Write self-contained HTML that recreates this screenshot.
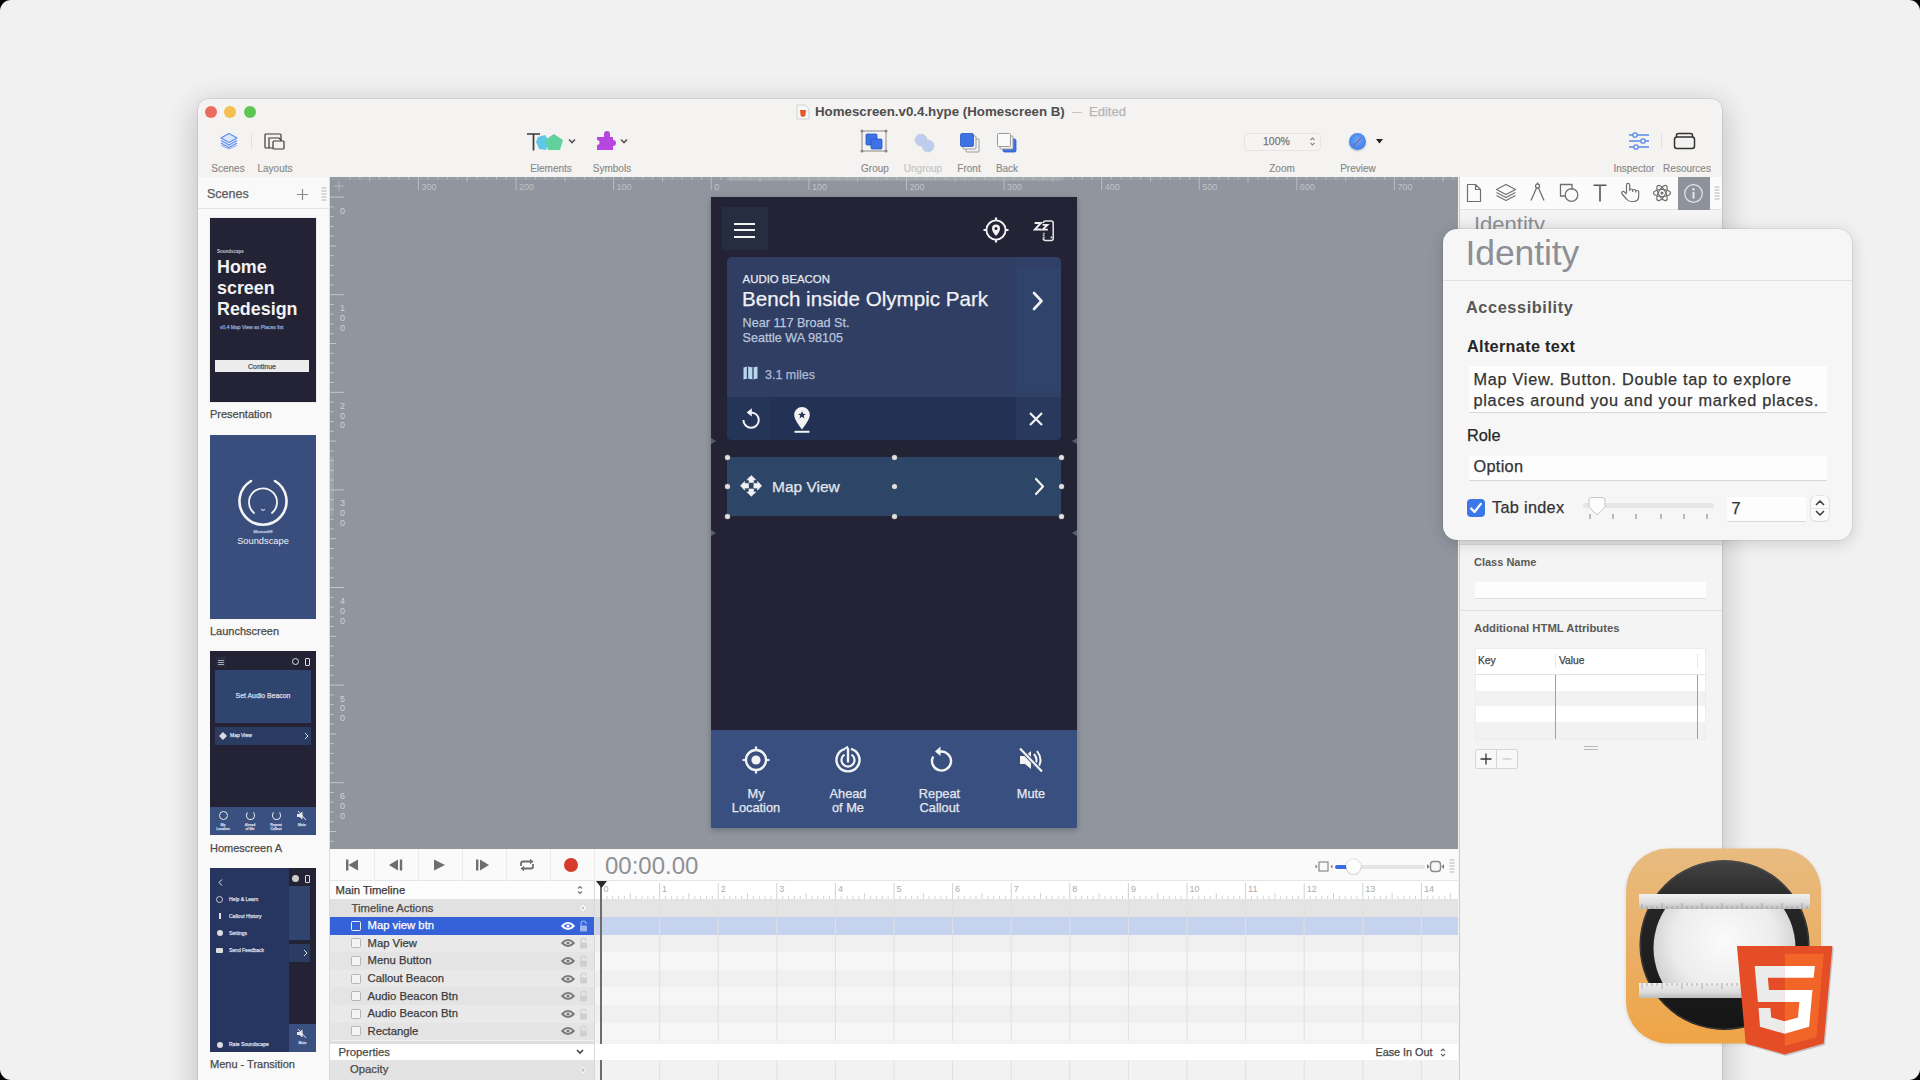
<!DOCTYPE html>
<html><head><meta charset="utf-8">
<style>
*{box-sizing:border-box;margin:0;padding:0}
html,body{width:1920px;height:1080px;overflow:hidden;background:#000}
body{font-family:"Liberation Sans",sans-serif;position:relative}
.a{position:absolute}
#scr{position:absolute;left:0;top:0;width:1920px;height:1080px;background:#f1f1f1;border-radius:11px;overflow:hidden}
#win{position:absolute;left:198px;top:99px;width:1524px;height:1000px;background:#f4f3f1;border-radius:10px 10px 0 0;box-shadow:0 0 0 .5px rgba(0,0,0,.14),0 8px 30px 3px rgba(0,0,0,.2)}
.tl{position:absolute;width:12px;height:12px;border-radius:50%}
.lbl{position:absolute;font-size:10px;color:#8a8a8a;margin-top:1px;text-align:center;white-space:nowrap}
.t{position:absolute;white-space:nowrap;line-height:1;-webkit-text-stroke:.25px currentColor}
.lbl{-webkit-text-stroke:.15px currentColor}
.t[style*="font-weight:bold"]{-webkit-text-stroke:0}
</style></head><body>
<div id="scr">
<div id="win"></div>

<!-- ===== TOOLBAR ===== -->
<div class="tl" style="left:205px;top:106px;background:#ec6a5e"></div>
<div class="tl" style="left:224px;top:106px;background:#f4bf4f"></div>
<div class="tl" style="left:244px;top:106px;background:#61c554"></div>
<!-- scenes icon -->
<svg class="a" style="left:219px;top:132px" width="20" height="18" viewBox="0 0 20 18">
<g fill="none" stroke="#5b8af0" stroke-width="1.2" stroke-linejoin="round">
<path d="M10 1.5 L18 6 L10 10.5 L2 6 Z" fill="#dbe5fb"/>
<path d="M2 8.5 L10 13 L18 8.5"/><path d="M2 11 L10 15.5 L18 11"/><path d="M2 13.3 L10 17 L18 13.3" opacity=".6"/>
</g></svg>
<div class="a" style="left:251px;top:134px;width:1px;height:14px;background:#e2e0de"></div>
<!-- layouts icon -->
<svg class="a" style="left:264px;top:133px" width="22" height="17" viewBox="0 0 22 17">
<g fill="none" stroke="#3a3a3a" stroke-width="1.2">
<rect x="1" y="1" width="16" height="14" rx="1"/>
<path d="M5 15 V5 H15 L17 7" /><rect x="9" y="8" width="11" height="8" rx="1" fill="#f4f3f1"/>
</g></svg>
<div class="lbl" style="left:208px;top:162px;width:40px">Scenes</div>
<div class="lbl" style="left:255px;top:162px;width:40px">Layouts</div>
<!-- elements icon -->
<svg class="a" style="left:526px;top:132px" width="16" height="20" viewBox="0 0 16 20"><path d="M1 2 H14 M7.5 2 V18.5" stroke="#3a3a3a" stroke-width="1.7"/></svg>
<svg class="a" style="left:535px;top:133px" width="30" height="19" viewBox="0 0 30 19">
<path d="M3 4 L10 2 L14 8 L11 17 L4 16 L1 9 Z" fill="#5fc7e8"/>
<path d="M19 1 L28 7 L25 17 L13 17 L10 7 Z" fill="#62d19d"/>
</svg>
<svg class="a" style="left:567px;top:138px" width="10" height="7" viewBox="0 0 10 7"><path d="M2 1.5 L5 4.5 L8 1.5" fill="none" stroke="#555" stroke-width="1.6"/></svg>
<!-- symbols icon -->
<svg class="a" style="left:596px;top:130px" width="23" height="22" viewBox="0 0 23 22">
<path d="M1 7 H8 V4 A3 3 0 0 1 14 4 V7 H17 V10 A3 3 0 0 1 17 16 V20 H1 V15 A2.5 2.5 0 0 0 1 10 Z" fill="#b646e0"/>
</svg>
<svg class="a" style="left:619px;top:138px" width="10" height="7" viewBox="0 0 10 7"><path d="M2 1.5 L5 4.5 L8 1.5" fill="none" stroke="#555" stroke-width="1.6"/></svg>
<div class="lbl" style="left:521px;top:162px;width:60px">Elements</div>
<div class="lbl" style="left:582px;top:162px;width:60px">Symbols</div>
<!-- title -->
<svg class="a" style="left:796px;top:104px" width="14" height="16" viewBox="0 0 14 16">
<path d="M1 1 H9 L13 5 V15 H1 Z" fill="#f7f7f7" stroke="#cfcfcf" stroke-width="1"/>
<path d="M4 6 H10 L9.3 12 L7 13 L4.7 12 Z" fill="#e5572b"/>
</svg>
<div class="t" style="left:815px;top:105px;font-size:13.3px;font-weight:bold;color:#4e4e4e">Homescreen.v0.4.hype (Homescreen B)</div>
<div class="a" style="left:1072px;top:112px;width:10px;height:1px;background:#c4c4c4"></div>
<div class="t" style="left:1089px;top:105px;font-size:13px;color:#b5b5b5">Edited</div>
<!-- group -->
<svg class="a" style="left:860px;top:129px" width="29" height="25" viewBox="0 0 29 25">
<rect x="2" y="2" width="24" height="20" fill="none" stroke="#8a8a8a" stroke-width="1"/>
<g fill="#8a8a8a"><circle cx="2" cy="2" r="1.6"/><circle cx="26" cy="2" r="1.6"/><circle cx="2" cy="22" r="1.6"/><circle cx="26" cy="22" r="1.6"/></g>
<rect x="6" y="5" width="11" height="11" rx="1" fill="#3d72e6" stroke="#2c57c0" stroke-width=".8"/>
<rect x="11" y="10" width="11" height="10" rx="1" fill="#3d72e6" stroke="#2c57c0" stroke-width=".8"/>
</svg>
<!-- ungroup -->
<svg class="a" style="left:913px;top:132px" width="24" height="22" viewBox="0 0 24 22" opacity=".45">
<circle cx="8" cy="8" r="6" fill="#7aa0f0" stroke="#888" stroke-width=".8" stroke-dasharray="1.5 1"/>
<circle cx="15" cy="14" r="6" fill="#7aa0f0" stroke="#888" stroke-width=".8" stroke-dasharray="1.5 1"/>
</svg>
<!-- front -->
<svg class="a" style="left:959px;top:132px" width="23" height="22" viewBox="0 0 23 22">
<rect x="7" y="7" width="13" height="13" rx="1" fill="#f3f3f3" stroke="#9a9a9a" stroke-width="1"/>
<rect x="4" y="4" width="13" height="13" rx="1" fill="#f3f3f3" stroke="#9a9a9a" stroke-width="1"/>
<rect x="1.5" y="1.5" width="13" height="13" rx="1.5" fill="#3d72e6" stroke="#2c57c0" stroke-width=".8"/>
</svg>
<!-- back -->
<svg class="a" style="left:996px;top:132px" width="23" height="22" viewBox="0 0 23 22">
<rect x="7" y="7" width="13" height="13" rx="1.5" fill="#3d72e6" stroke="#2c57c0" stroke-width=".8"/>
<rect x="4" y="4" width="13" height="13" rx="1" fill="#f3f3f3" stroke="#9a9a9a" stroke-width="1"/>
<rect x="1.5" y="1.5" width="13" height="13" rx="1" fill="#fafafa" stroke="#9a9a9a" stroke-width="1"/>
</svg>
<div class="lbl" style="left:850px;top:162px;width:50px">Group</div>
<div class="lbl" style="left:898px;top:162px;width:50px;color:#c4c4c4">Ungroup</div>
<div class="lbl" style="left:944px;top:162px;width:50px">Front</div>
<div class="lbl" style="left:982px;top:162px;width:50px">Back</div>
<!-- zoom -->
<div class="a" style="left:1244px;top:133px;width:77px;height:18px;border:1px solid #e6e4e2;border-radius:4px;background:#f5f4f2"></div>
<div class="t" style="left:1263px;top:136px;font-size:10.5px;color:#777">100%</div>
<svg class="a" style="left:1309px;top:136px" width="7" height="11" viewBox="0 0 7 11"><path d="M1.5 4 L3.5 2 L5.5 4 M1.5 7 L3.5 9 L5.5 7" fill="none" stroke="#888" stroke-width="1.1"/></svg>
<div class="lbl" style="left:1257px;top:162px;width:50px">Zoom</div>
<!-- preview safari -->
<div class="a" style="left:1349px;top:133px;width:17px;height:17px;border-radius:50%;background:radial-gradient(circle at 50% 40%,#6aa7ff,#2e6fe0);box-shadow:0 1px 2px rgba(0,0,0,.25)"></div>
<svg class="a" style="left:1351px;top:135px" width="13" height="13" viewBox="0 0 13 13"><path d="M10.5 2.5 L5.5 7.5 L2.5 10.5 L7.5 5.5 Z" fill="#e8e8e8" stroke="#c04040" stroke-width=".8"/></svg>
<svg class="a" style="left:1375px;top:138px" width="9" height="7" viewBox="0 0 9 7"><path d="M1 1 H8 L4.5 5.5 Z" fill="#222"/></svg>
<div class="lbl" style="left:1328px;top:162px;width:60px">Preview</div>
<!-- inspector icon -->
<svg class="a" style="left:1627px;top:131px" width="24" height="20" viewBox="0 0 24 20">
<g stroke="#5b8af0" stroke-width="1.3" fill="#f4f3f1">
<path d="M2 4 H22 M2 10 H22 M2 16 H22"/>
<circle cx="8" cy="4" r="2.2"/><circle cx="16" cy="10" r="2.2"/><circle cx="9" cy="16" r="2.2"/>
</g></svg>
<div class="a" style="left:1661px;top:134px;width:1px;height:14px;background:#e2e0de"></div>
<!-- resources icon -->
<svg class="a" style="left:1673px;top:132px" width="23" height="18" viewBox="0 0 23 18">
<g fill="none" stroke="#333" stroke-width="1.5">
<rect x="1.5" y="5" width="20" height="11.5" rx="2.5"/><path d="M3.5 5 V3.2 Q3.5 1.5 5.5 1.5 H17.5 Q19.5 1.5 19.5 3.2 V5"/>
</g></svg>
<div class="lbl" style="left:1609px;top:162px;width:50px">Inspector</div>
<div class="lbl" style="left:1659px;top:162px;width:56px">Resources</div>

<!-- ===== SIDEBAR ===== -->
<div class="a" id="side" style="left:198px;top:177px;width:132px;height:903px;background:#f9f9f9;border-right:1px solid #dcdcdc"></div>
<div class="a" style="left:198px;top:177px;width:131px;height:32px;background:#f9f9f9;border-bottom:1px solid #e3e3e3"></div>
<div class="t" style="left:207px;top:188px;font-size:12.5px;color:#5a5a5a">Scenes</div>
<svg class="a" style="left:296px;top:188px" width="13" height="13" viewBox="0 0 13 13"><path d="M6.5 1 V12 M1 6.5 H12" stroke="#8a8a8a" stroke-width="1.2"/></svg>
<svg class="a" style="left:321px;top:186px" width="6" height="16" viewBox="0 0 6 16"><g stroke="#b5b5b5" stroke-width="1"><path d="M0.5 2 H5.5 M0.5 5 H5.5 M0.5 8 H5.5 M0.5 11 H5.5 M0.5 14 H5.5"/></g></svg>
<!-- thumb 1 -->
<div class="a" style="left:210px;top:218px;width:106px;height:184px;background:#232335;box-shadow:0 0 1px rgba(0,0,0,.3)">
 <div class="t" style="left:7px;top:32px;font-size:4.5px;color:#c8c8d0;font-weight:bold">Soundscape</div>
 <div class="t" style="left:7px;top:39.3px;font-size:17.9px;font-weight:bold;color:#f2f2f2;line-height:20.8px">Home<br>screen<br>Redesign</div>
 <div class="t" style="left:10px;top:107px;font-size:5px;color:#8ea2d4">v0.4 Map View as Places list</div>
 <div class="a" style="left:5px;top:142px;width:94px;height:12px;background:#ececec"></div>
 <div class="t" style="left:5px;top:144.5px;width:94px;text-align:center;font-size:7px;color:#555">Continue</div>
</div>
<div class="t" style="left:210px;top:409.3px;font-size:11px;color:#4a4a4a">Presentation</div>
<!-- thumb 2 -->
<div class="a" style="left:210px;top:435px;width:106px;height:184px;background:#394e7d">
 <svg class="a" style="left:27px;top:39px" width="52" height="52" viewBox="0 0 52 52">
  <path d="M14 7 A23.5 23.5 0 1 0 38 7" fill="none" stroke="#f4f4f4" stroke-width="2.6" stroke-linecap="round"/>
  <path d="M17 39 A14 14 0 1 1 35 39" fill="none" stroke="#f4f4f4" stroke-width="1.8" stroke-linecap="round"/>
  <path d="M24 35.5 Q26 37 28 35.5" fill="none" stroke="#f4f4f4" stroke-width="1"/>
 </svg>
 <div class="t" style="left:0;top:95px;width:106px;text-align:center;font-size:4px;color:#c0c8e0">Microsoft®</div>
 <div class="t" style="left:0;top:102px;width:106px;text-align:center;font-size:9.3px;color:#eef0f6;-webkit-text-stroke:0">Soundscape</div>
</div>
<div class="t" style="left:210px;top:626.3px;font-size:11px;color:#4a4a4a">Launchscreen</div>
<!-- thumb 3 -->
<div class="a" style="left:210px;top:651px;width:106px;height:184px;background:#232335;overflow:hidden">
 <div class="a" style="left:6px;top:6px;width:10px;height:10px;background:#282e42"></div>
 <svg class="a" style="left:8px;top:8.5px" width="6" height="5" viewBox="0 0 6 5"><path d="M0 .5 H6 M0 2.5 H6 M0 4.5 H6" stroke="#ddd" stroke-width=".7"/></svg>
 <div class="a" style="left:82px;top:7px;width:7px;height:7px;border-radius:50%;border:1.2px solid #ddd"></div>
 <div class="a" style="left:95px;top:7px;width:5px;height:8px;border:1px solid #ddd;border-radius:1px"></div>
 <div class="a" style="left:5px;top:19px;width:96px;height:53px;background:#2f4570"></div>
 <div class="t" style="left:5px;top:42px;width:96px;text-align:center;font-size:6.9px;color:#d8deea">Set Audio Beacon</div>
 <div class="a" style="left:5px;top:76px;width:96px;height:18px;background:#2b3c62"></div>
 <svg class="a" style="left:9px;top:81px" width="8" height="8" viewBox="0 0 8 8"><path d="M4 0 L6 2 L8 4 L6 6 L4 8 L2 6 L0 4 L2 2 Z" fill="#ddd"/></svg>
 <div class="t" style="left:20px;top:82px;font-size:5px;color:#d8deea">Map View</div>
 <svg class="a" style="left:94px;top:81px" width="5" height="8" viewBox="0 0 5 8"><path d="M1 1 L4 4 L1 7" fill="none" stroke="#ddd" stroke-width="1"/></svg>
 <div class="a" style="left:0;top:156px;width:106px;height:28px;background:#3a5080"></div>
 <div class="a" style="left:9px;top:160px;width:9px;height:9px;border-radius:50%;border:1.5px solid #e8e8e8"></div>
 <div class="a" style="left:36px;top:160px;width:9px;height:9px;border-radius:50%;border:1.5px solid #e8e8e8;border-top-color:transparent"></div>
 <div class="a" style="left:62px;top:160px;width:9px;height:9px;border-radius:50%;border:1.5px solid #e8e8e8;border-top-color:transparent"></div>
 <svg class="a" style="left:87px;top:160px" width="10" height="9" viewBox="0 0 10 9"><path d="M0 3 H2.5 L5.5 0.5 V8.5 L2.5 6 H0 Z" fill="#e8e8e8"/><path d="M1 0 L9 9" stroke="#e8e8e8" stroke-width="1"/></svg>
 <div class="t" style="left:0;top:172px;width:26px;text-align:center;font-size:3.6px;color:#cfd6e6;line-height:4px">My<br>Location</div>
 <div class="t" style="left:27px;top:172px;width:26px;text-align:center;font-size:3.6px;color:#cfd6e6;line-height:4px">Ahead<br>of Me</div>
 <div class="t" style="left:53px;top:172px;width:26px;text-align:center;font-size:3.6px;color:#cfd6e6;line-height:4px">Repeat<br>Callout</div>
 <div class="t" style="left:79px;top:172px;width:26px;text-align:center;font-size:3.6px;color:#cfd6e6;line-height:4px">Mute</div>
</div>
<div class="t" style="left:210px;top:843.3px;font-size:11px;color:#4a4a4a">Homescreen A</div>
<!-- thumb 4 -->
<div class="a" style="left:210px;top:868px;width:106px;height:184px;background:#232335;overflow:hidden">
 <div class="a" style="left:79px;top:18px;width:21px;height:54px;background:#2f4570"></div>
 <div class="a" style="left:79px;top:76px;width:21px;height:18px;background:#2b3c62"></div>
 <svg class="a" style="left:93px;top:81px" width="5" height="8" viewBox="0 0 5 8"><path d="M1 1 L4 4 L1 7" fill="none" stroke="#ddd" stroke-width="1"/></svg>
 <div class="a" style="left:82px;top:7px;width:7px;height:7px;border-radius:50%;background:#ccc"></div>
 <div class="a" style="left:95px;top:7px;width:5px;height:8px;border:1px solid #ddd;border-radius:1px"></div>
 <div class="a" style="left:79px;top:156px;width:27px;height:28px;background:#3a5080"></div>
 <svg class="a" style="left:87px;top:161px" width="10" height="9" viewBox="0 0 10 9"><path d="M0 3 H2.5 L5.5 0.5 V8.5 L2.5 6 H0 Z" fill="#e8e8e8"/><path d="M1 0 L9 9" stroke="#e8e8e8" stroke-width="1"/></svg>
 <div class="t" style="left:79px;top:174px;width:27px;text-align:center;font-size:3.6px;color:#cfd6e6">Mute</div>
 <div class="a" style="left:0;top:0;width:79px;height:184px;background:#263660"></div>
 <svg class="a" style="left:8px;top:11px" width="5" height="7" viewBox="0 0 5 7"><path d="M4 .5 L1 3.5 L4 6.5" fill="none" stroke="#e8e8e8" stroke-width="1"/></svg>
 <div class="a" style="left:6px;top:28px;width:7px;height:7px;border-radius:50%;border:1px solid #ccc"></div>
 <div class="a" style="left:9px;top:45px;width:1.5px;height:6px;background:#ddd"></div>
 <div class="a" style="left:6.5px;top:62px;width:6px;height:6px;border-radius:50%;background:#ddd"></div>
 <div class="a" style="left:6px;top:80px;width:7px;height:5px;background:#ddd;border-radius:1px"></div>
 <div class="a" style="left:6.5px;top:174px;width:6px;height:6px;border-radius:50%;background:#ddd"></div>
 <div class="t" style="left:19px;top:29px;font-size:5px;color:#d8deea">Help &amp; Learn</div>
 <div class="t" style="left:19px;top:46px;font-size:5px;color:#d8deea">Callout History</div>
 <div class="t" style="left:19px;top:63px;font-size:5px;color:#d8deea">Settings</div>
 <div class="t" style="left:19px;top:80px;font-size:5px;color:#d8deea">Send Feedback</div>
 <div class="t" style="left:19px;top:174px;font-size:5px;color:#d8deea">Rate Soundscape</div>
</div>
<div class="t" style="left:210px;top:1059.3px;font-size:11px;color:#4a4a4a">Menu - Transition</div>

<!-- ===== CANVAS ===== -->
<div class="a" id="canvas" style="left:330px;top:177px;width:1128px;height:672px;background:#90959e"></div>
<svg class="a" style="left:330px;top:177px" width="1128" height="672" viewBox="0 0 1128 672">
<rect x="0" y="0" width="1128" height="3" fill="#fff" opacity=".07"/>
<rect x="397.0" y="0" width="334.0" height="4" fill="#fff" opacity=".12"/>
<rect x="0" y="280.0" width="4" height="59.0" fill="#fff" opacity=".12"/>
<path d="M20.1 0 V2.5 M29.9 0 V2.5 M39.7 0 V4.5 M49.4 0 V2.5 M59.2 0 V2.5 M68.9 0 V2.5 M78.7 0 V2.5 M88.4 0 V13.0 M98.2 0 V2.5 M108.0 0 V2.5 M117.7 0 V2.5 M127.5 0 V2.5 M137.2 0 V4.5 M147.0 0 V2.5 M156.8 0 V2.5 M166.5 0 V2.5 M176.3 0 V2.5 M186.0 0 V13.0 M195.8 0 V2.5 M205.6 0 V2.5 M215.3 0 V2.5 M225.1 0 V2.5 M234.9 0 V4.5 M244.6 0 V2.5 M254.4 0 V2.5 M264.1 0 V2.5 M273.9 0 V2.5 M283.6 0 V13.0 M293.4 0 V2.5 M303.2 0 V2.5 M312.9 0 V2.5 M322.7 0 V2.5 M332.5 0 V4.5 M342.2 0 V2.5 M352.0 0 V2.5 M361.7 0 V2.5 M371.5 0 V2.5 M381.2 0 V13.0 M391.0 0 V2.5 M400.8 0 V2.5 M410.5 0 V2.5 M420.3 0 V2.5 M430.0 0 V4.5 M439.8 0 V2.5 M449.6 0 V2.5 M459.3 0 V2.5 M469.1 0 V2.5 M478.9 0 V13.0 M488.6 0 V2.5 M498.4 0 V2.5 M508.1 0 V2.5 M517.9 0 V2.5 M527.6 0 V4.5 M537.4 0 V2.5 M547.2 0 V2.5 M556.9 0 V2.5 M566.7 0 V2.5 M576.5 0 V13.0 M586.2 0 V2.5 M596.0 0 V2.5 M605.7 0 V2.5 M615.5 0 V2.5 M625.2 0 V4.5 M635.0 0 V2.5 M644.8 0 V2.5 M654.5 0 V2.5 M664.3 0 V2.5 M674.0 0 V13.0 M683.8 0 V2.5 M693.6 0 V2.5 M703.3 0 V2.5 M713.1 0 V2.5 M722.8 0 V4.5 M732.6 0 V2.5 M742.4 0 V2.5 M752.1 0 V2.5 M761.9 0 V2.5 M771.7 0 V13.0 M781.4 0 V2.5 M791.2 0 V2.5 M800.9 0 V2.5 M810.7 0 V2.5 M820.5 0 V4.5 M830.2 0 V2.5 M840.0 0 V2.5 M849.7 0 V2.5 M859.5 0 V2.5 M869.2 0 V13.0 M879.0 0 V2.5 M888.8 0 V2.5 M898.5 0 V2.5 M908.3 0 V2.5 M918.0 0 V4.5 M927.8 0 V2.5 M937.6 0 V2.5 M947.3 0 V2.5 M957.1 0 V2.5 M966.8 0 V13.0 M976.6 0 V2.5 M986.4 0 V2.5 M996.1 0 V2.5 M1005.9 0 V2.5 M1015.7 0 V4.5 M1025.4 0 V2.5 M1035.2 0 V2.5 M1044.9 0 V2.5 M1054.7 0 V2.5 M1064.4 0 V13.0 M1074.2 0 V2.5 M1084.0 0 V2.5 M1093.7 0 V2.5 M1103.5 0 V2.5 M1113.2 0 V4.5 M1123.0 0 V2.5" stroke="#b9bdc4" stroke-width="1"/>
<g font-family="Liberation Sans" font-size="9" fill="#c0c4ca"><text x="91.4" y="13" >300</text><text x="189.0" y="13" >200</text><text x="286.6" y="13" >100</text><text x="384.2" y="13" >0</text><text x="481.9" y="13" >100</text><text x="579.5" y="13" >200</text><text x="677.0" y="13" >300</text><text x="774.7" y="13" >400</text><text x="872.2" y="13" >500</text><text x="969.8" y="13" >600</text><text x="1067.4" y="13" >700</text></g>
<path d="M0 20.1 H14.0 M0 29.9 H3.5 M0 39.6 H3.5 M0 49.4 H3.5 M0 59.1 H3.5 M0 68.9 H6.0 M0 78.7 H3.5 M0 88.4 H3.5 M0 98.2 H3.5 M0 107.9 H3.5 M0 117.7 H14.0 M0 127.5 H3.5 M0 137.2 H3.5 M0 147.0 H3.5 M0 156.7 H3.5 M0 166.5 H6.0 M0 176.3 H3.5 M0 186.0 H3.5 M0 195.8 H3.5 M0 205.5 H3.5 M0 215.3 H14.0 M0 225.1 H3.5 M0 234.8 H3.5 M0 244.6 H3.5 M0 254.3 H3.5 M0 264.1 H6.0 M0 273.9 H3.5 M0 283.6 H3.5 M0 293.4 H3.5 M0 303.1 H3.5 M0 312.9 H14.0 M0 322.7 H3.5 M0 332.4 H3.5 M0 342.2 H3.5 M0 351.9 H3.5 M0 361.7 H6.0 M0 371.5 H3.5 M0 381.2 H3.5 M0 391.0 H3.5 M0 400.7 H3.5 M0 410.5 H14.0 M0 420.3 H3.5 M0 430.0 H3.5 M0 439.8 H3.5 M0 449.5 H3.5 M0 459.3 H6.0 M0 469.1 H3.5 M0 478.8 H3.5 M0 488.6 H3.5 M0 498.3 H3.5 M0 508.1 H14.0 M0 517.9 H3.5 M0 527.6 H3.5 M0 537.4 H3.5 M0 547.1 H3.5 M0 556.9 H6.0 M0 566.7 H3.5 M0 576.4 H3.5 M0 586.2 H3.5 M0 595.9 H3.5 M0 605.7 H14.0 M0 615.5 H3.5 M0 625.2 H3.5 M0 635.0 H3.5 M0 644.7 H3.5 M0 654.5 H6.0 M0 664.3 H3.5" stroke="#c3c6cc" stroke-width="1"/>
<g font-family="Liberation Sans" font-size="9" fill="#d0d3d8"><text x="12.5" y="36.6" text-anchor="middle">0</text><text x="12.5" y="134.2" text-anchor="middle">1</text><text x="12.5" y="144.0" text-anchor="middle">0</text><text x="12.5" y="153.8" text-anchor="middle">0</text><text x="12.5" y="231.8" text-anchor="middle">2</text><text x="12.5" y="241.6" text-anchor="middle">0</text><text x="12.5" y="251.4" text-anchor="middle">0</text><text x="12.5" y="329.4" text-anchor="middle">3</text><text x="12.5" y="339.2" text-anchor="middle">0</text><text x="12.5" y="349.0" text-anchor="middle">0</text><text x="12.5" y="427.0" text-anchor="middle">4</text><text x="12.5" y="436.8" text-anchor="middle">0</text><text x="12.5" y="446.6" text-anchor="middle">0</text><text x="12.5" y="524.6" text-anchor="middle">5</text><text x="12.5" y="534.4" text-anchor="middle">0</text><text x="12.5" y="544.2" text-anchor="middle">0</text><text x="12.5" y="622.2" text-anchor="middle">6</text><text x="12.5" y="632.0" text-anchor="middle">0</text><text x="12.5" y="641.8" text-anchor="middle">0</text></g>
<path d="M9 4 V14 M4 9 H14" stroke="#b4b8bf" stroke-width="1"/>
</svg>
<!-- phone -->
<div class="a" style="left:711px;top:197px;width:366px;height:631px;background:#232335;box-shadow:0 2px 6px rgba(0,0,0,.25);overflow:hidden">
 <div class="a" style="left:10.5px;top:9.6px;width:46.5px;height:43.4px;background:#272d40"></div>
 <div class="a" style="left:22.5px;top:25.7px;width:21.5px;height:2px;background:#f2f2f2"></div>
 <div class="a" style="left:22.5px;top:32px;width:21.5px;height:2px;background:#f2f2f2"></div>
 <div class="a" style="left:22.5px;top:38.5px;width:21.5px;height:2px;background:#f2f2f2"></div>
 <!-- location icon -->
 <svg class="a" style="left:271px;top:18.7px" width="28" height="28" viewBox="0 0 28 28">
  <circle cx="14" cy="14" r="9.6" fill="none" stroke="#f2f2f2" stroke-width="1.9"/>
  <path d="M14 1.5 V5 M14 23 V26.5 M1.5 14 H5 M23 14 H26.5" stroke="#f2f2f2" stroke-width="2.2"/>
  <path d="M14 20 C11 16.5 10 14.5 10 12.5 A4 4 0 0 1 18 12.5 C18 14.5 17 16.5 14 20 Z" fill="#f2f2f2"/>
  <circle cx="14" cy="12.5" r="1.5" fill="#232335"/>
 </svg>
 <!-- zzz phone icon -->
 <svg class="a" style="left:321px;top:20px" width="26" height="28" viewBox="0 0 26 28">
  <rect x="11.4" y="4.1" width="9.8" height="19.3" rx="2" fill="none" stroke="#e6e6e6" stroke-width="1.5"/>
  <rect x="9.3" y="6.2" width="3.4" height="14.6" fill="#232335"/>
  <path d="M2.6 6 H8.9 L3 12.4 H9.4" fill="none" stroke="#eeeeee" stroke-width="2"/>
  <path d="M10.6 7.9 H15.4 L10.7 12.6 H15.8" fill="none" stroke="#eeeeee" stroke-width="1.9"/>
  <path d="M10.7 16.3 H12.6 L10.9 18.8 H12.8 M10.7 20.2 H12.6 L10.9 22.2 H12.8" fill="none" stroke="#cfcfcf" stroke-width=".9"/>
  <rect x="18.6" y="19.6" width="1.8" height="1.6" fill="#dddddd"/>
 </svg>
 <!-- card -->
 <div class="a" style="left:16px;top:60.4px;width:334px;height:182.6px;background:#303e64;border-radius:5px;overflow:hidden">
  <div class="a" style="left:284px;top:0;width:50px;height:140px;background:#2f3f66"></div><div class="a" style="left:289.7px;top:10.6px;width:44.3px;height:123px;background:#30436a"></div>
  <div class="a" style="left:0;top:140px;width:334px;height:43px;background:#233254"></div>
  <div class="a" style="left:0;top:140px;width:44px;height:43px;background:#253558"></div>
  <div class="a" style="left:289px;top:140px;width:45px;height:43px;background:#29395e"></div>
  <div class="t" style="left:15.6px;top:16.5px;font-size:11.4px;color:#e6e8ee">AUDIO BEACON</div>
  <div class="t" style="left:15px;top:31.3px;font-size:20.6px;color:#f0f1f5">Bench inside Olympic Park</div>
  <div class="t" style="left:15.6px;top:60.1px;font-size:12.6px;color:#b9c6dc">Near 117 Broad St.</div>
  <div class="t" style="left:15.6px;top:74.6px;font-size:12.6px;color:#b9c6dc">Seattle WA 98105</div>
  <svg class="a" style="left:15.6px;top:108.6px" width="15" height="14" viewBox="0 0 15 14">
   <path d="M0.5 1.5 L4.5 0.5 L10 1.5 L14.5 0.5 V12.5 L10 13.5 L4.5 12.5 L0.5 13.5 Z" fill="#b8d6ee"/>
   <path d="M4.5 0.5 V12.5 M10 1.5 V13.5" stroke="#303e64" stroke-width="1.3"/>
  </svg>
  <div class="t" style="left:38px;top:111.8px;font-size:12.5px;color:#aebbd4">3.1 miles</div>
  <svg class="a" style="left:301.2px;top:33px" width="18" height="22" viewBox="0 0 18 22"><path d="M6 3 L13.5 11 L6 19" fill="none" stroke="#f2f2f2" stroke-width="2.6" stroke-linecap="round" stroke-linejoin="round"/></svg>
  <!-- refresh -->
  <svg class="a" style="left:13.4px;top:149.5px" width="22" height="22" viewBox="0 0 22 22">
   <path d="M3.4 13.1 A7.7 7.7 0 1 0 11.1 5.4" fill="none" stroke="#f2f2f2" stroke-width="2"/>
   <path d="M11.8 1.3 L6.6 5.4 L11.8 9.5 Z" fill="#f2f2f2"/>
  </svg>
  <!-- pin -->
  <svg class="a" style="left:64.5px;top:149px" width="20" height="28" viewBox="0 0 20 28">
   <path d="M10 23.4 C4.8 16.5 2.2 12.5 2.2 8.8 A7.8 7.8 0 0 1 17.8 8.8 C17.8 12.5 15.2 16.5 10 23.4 Z" fill="#f2f2f2"/>
   <path d="M10 5 L11.1 7.8 L14 7.9 L11.7 9.6 L12.5 12.4 L10 10.8 L7.5 12.4 L8.3 9.6 L6 7.9 L8.9 7.8 Z" fill="#233254"/>
   <rect x="2.5" y="24.8" width="15" height="2" fill="#f2f2f2"/>
  </svg>
  <!-- close -->
  <svg class="a" style="left:300.6px;top:153.5px" width="16" height="16" viewBox="0 0 16 16"><path d="M2 2 L14 14 M14 2 L2 14" stroke="#f2f2f2" stroke-width="2.2"/></svg>
 </div>
 <!-- map view -->
 <div class="a" style="left:16px;top:259.7px;width:334px;height:59.7px;background:#2d4566"></div>
 <svg class="a" style="left:28.8px;top:277.6px" width="22" height="22" viewBox="0 0 22 22">
  <g fill="#f2f2f2" stroke="#f2f2f2" stroke-width=".6" stroke-linejoin="round">
   <path d="M11.3 0.6 L15.8 4.8 H13.6 V7.6 H9 V4.8 H6.8 Z"/><path d="M11.3 21.3 L15.8 17 H13.6 V14 H9 V17 H6.8 Z"/>
   <path d="M0.5 10.8 L4.7 6.4 V8.5 H8.5 V13.1 H4.7 V15.2 Z"/><path d="M21.7 10.8 L17.5 6.4 V8.5 H13.9 V13.1 H17.5 V15.2 Z"/>
  </g>
 </svg>
 <div class="t" style="left:61px;top:282.3px;font-size:15.5px;color:#e2e6ee">Map View</div>
 <svg class="a" style="left:320px;top:279px" width="16" height="22" viewBox="0 0 16 22"><path d="M5 3 L12 10.5 L5 18" fill="none" stroke="#f2f2f2" stroke-width="2.2" stroke-linecap="round" stroke-linejoin="round"/></svg>
 <!-- tab bar -->
 <div class="a" style="left:0;top:533.2px;width:366px;height:97.8px;background:#394f7f"></div>
 <svg class="a" style="left:30px;top:547.8px" width="30" height="30" viewBox="0 0 30 30">
  <circle cx="15" cy="15" r="10" fill="none" stroke="#f4f4f4" stroke-width="2.4"/>
  <circle cx="15" cy="15" r="4.6" fill="#f4f4f4"/>
  <path d="M15 1.5 V5 M15 25 V28.5 M1.5 15 H5 M25 15 H28.5" stroke="#f4f4f4" stroke-width="2.2"/>
 </svg>
 <svg class="a" style="left:122px;top:547.8px" width="30" height="30" viewBox="0 0 30 30">
  <path d="M12 3.8 A11.5 11.5 0 1 0 18 3.8" fill="none" stroke="#f4f4f4" stroke-width="2.4"/>
  <path d="M11.5 9.6 A6.5 6.5 0 1 0 18.5 9.6" fill="none" stroke="#f4f4f4" stroke-width="2.2"/>
  <path d="M15 4 V16.5" stroke="#f4f4f4" stroke-width="2.4" stroke-linecap="round"/>
  <path d="M12 3.8 L15 1.5" stroke="#f4f4f4" stroke-width="2"/>
 </svg>
 <svg class="a" style="left:213.5px;top:547.8px" width="30" height="30" viewBox="0 0 30 30">
  <path d="M8.2 11.5 A9.5 9.5 0 1 0 15 6.7" fill="none" stroke="#f4f4f4" stroke-width="2.4"/>
  <path d="M15.5 1.5 L10 6.5 L15.5 11 Z" fill="#f4f4f4"/>
 </svg>
 <svg class="a" style="left:305px;top:547.8px" width="30" height="30" viewBox="0 0 30 30">
  <path d="M4 11 H9 L15 6 V24 L9 19 H4 Z" fill="#f4f4f4"/>
  <path d="M18 9 Q23 15 18 21 M21 6 Q28 15 21 24" fill="none" stroke="#f4f4f4" stroke-width="2"/>
  <path d="M4 3.5 L26 26.5" stroke="#394f7f" stroke-width="4"/>
  <path d="M4 3.5 L26 26.5" stroke="#f4f4f4" stroke-width="2.2"/>
 </svg>
 <div class="t" style="left:0;top:589.5px;width:90px;text-align:center;font-size:12.8px;line-height:14.4px;color:#e4e8f0">My<br>Location</div>
 <div class="t" style="left:92px;top:589.5px;width:90px;text-align:center;font-size:12.8px;line-height:14.4px;color:#e4e8f0">Ahead<br>of Me</div>
 <div class="t" style="left:183.5px;top:589.5px;width:90px;text-align:center;font-size:12.8px;line-height:14.4px;color:#e4e8f0">Repeat<br>Callout</div>
 <div class="t" style="left:275px;top:589.5px;width:90px;text-align:center;font-size:12.8px;line-height:14.4px;color:#e4e8f0">Mute</div>
</div>
<svg class="a" style="left:711px;top:436px" width="6" height="100" viewBox="0 0 6 100"><path d="M0 2 L5 5 L0 8 Z M0 94 L5 97 L0 100 Z" fill="#80858e" opacity=".6"/></svg>
<svg class="a" style="left:1071px;top:436px" width="6" height="100" viewBox="0 0 6 100"><path d="M6 2 L1 5 L6 8 Z M6 94 L1 97 L6 100 Z" fill="#80858e" opacity=".6"/></svg>
<!-- selection handles -->
<div class="a" style="left:724.5px;top:454.5px;width:5px;height:5px;border-radius:50%;background:#e0e0e0;box-shadow:0 0 0 .6px #555"></div>
<div class="a" style="left:891.5px;top:454.5px;width:5px;height:5px;border-radius:50%;background:#e0e0e0;box-shadow:0 0 0 .6px #555"></div>
<div class="a" style="left:1058.5px;top:454.5px;width:5px;height:5px;border-radius:50%;background:#e0e0e0;box-shadow:0 0 0 .6px #555"></div>
<div class="a" style="left:724.5px;top:484px;width:5px;height:5px;border-radius:50%;background:#e0e0e0;box-shadow:0 0 0 .6px #555"></div>
<div class="a" style="left:891.5px;top:484px;width:5px;height:5px;border-radius:50%;background:#e0e0e0;box-shadow:0 0 0 .6px #555"></div>
<div class="a" style="left:1058.5px;top:484px;width:5px;height:5px;border-radius:50%;background:#e0e0e0;box-shadow:0 0 0 .6px #555"></div>
<div class="a" style="left:724.5px;top:513.5px;width:5px;height:5px;border-radius:50%;background:#e0e0e0;box-shadow:0 0 0 .6px #555"></div>
<div class="a" style="left:891.5px;top:513.5px;width:5px;height:5px;border-radius:50%;background:#e0e0e0;box-shadow:0 0 0 .6px #555"></div>
<div class="a" style="left:1058.5px;top:513.5px;width:5px;height:5px;border-radius:50%;background:#e0e0e0;box-shadow:0 0 0 .6px #555"></div>

<!-- ===== TIMELINE ===== -->
<div class="a" style="left:330px;top:849px;width:1128px;height:231px;background:#f3f3f3;border-left:1px solid #c8c8c8"></div>
<div class="a" style="left:330px;top:849px;width:1128px;height:32px;background:#fafafa;border-bottom:1px solid #e6e6e6"></div>
<div class="a" style="left:374.0px;top:849px;width:1px;height:32px;background:#ebebeb"></div>
<div class="a" style="left:418.0px;top:849px;width:1px;height:32px;background:#ebebeb"></div>
<div class="a" style="left:462.0px;top:849px;width:1px;height:32px;background:#ebebeb"></div>
<div class="a" style="left:506.0px;top:849px;width:1px;height:32px;background:#ebebeb"></div>
<div class="a" style="left:550.0px;top:849px;width:1px;height:32px;background:#ebebeb"></div>
<div class="a" style="left:594.0px;top:849px;width:1px;height:32px;background:#ebebeb"></div>
<svg class="a" style="left:344px;top:857px" width="16" height="16" viewBox="0 0 16 16"><rect x="2" y="2.5" width="2.4" height="11" fill="#6e6e6e"/><path d="M14 2.5 V13.5 L4.4 8 Z" fill="#6e6e6e"/></svg>
<svg class="a" style="left:388px;top:857px" width="16" height="16" viewBox="0 0 16 16"><path d="M10 2.5 V13.5 L1 8 Z" fill="#6e6e6e"/><rect x="11.8" y="2.5" width="2.4" height="11" fill="#6e6e6e"/></svg>
<svg class="a" style="left:431px;top:857px" width="16" height="16" viewBox="0 0 16 16"><path d="M3 2.5 V13.5 L14 8 Z" fill="#6e6e6e"/></svg>
<svg class="a" style="left:474px;top:857px" width="16" height="16" viewBox="0 0 16 16"><rect x="2" y="2.5" width="2.4" height="11" fill="#6e6e6e"/><path d="M6 2.5 V13.5 L15 8 Z" fill="#6e6e6e"/></svg>
<svg class="a" style="left:518px;top:857px" width="18" height="16" viewBox="0 0 18 16"><g fill="none" stroke="#6e6e6e" stroke-width="1.8"><path d="M3 9 V6.5 Q3 4.5 5 4.5 H13"/><path d="M15 7 V9.5 Q15 11.5 13 11.5 H5"/></g><path d="M12 1.8 L15.5 4.5 L12 7.2 Z M6 8.8 L2.5 11.5 L6 14.2 Z" fill="#6e6e6e"/></svg>
<div class="a" style="left:564px;top:858px;width:14px;height:14px;border-radius:50%;background:#d63a2a"></div>
<div class="t" style="left:605px;top:853.5px;font-size:24px;color:#8f9094;letter-spacing:0px;-webkit-text-stroke:0">00:00.00</div>
<svg class="a" style="left:1314px;top:860px" width="20" height="13" viewBox="0 0 20 13"><rect x="5" y="2" width="9" height="9" fill="#f8f8f8" stroke="#8a8a8a" stroke-width="1.2"/><path d="M1.5 4.5 L3.5 6.5 L1.5 8.5 Z M18.5 4.5 L16.5 6.5 L18.5 8.5 Z" fill="#777"/></svg>
<div class="a" style="left:1335px;top:865px;width:90px;height:4px;border-radius:2px;background:#e4e4e4"></div>
<div class="a" style="left:1335px;top:865px;width:14px;height:4px;border-radius:2px;background:#3a6ee6"></div>
<div class="a" style="left:1346px;top:859px;width:15px;height:15px;border-radius:50%;background:#fdfdfd;box-shadow:0 0 1px rgba(0,0,0,.35),0 1px 2px rgba(0,0,0,.12)"></div>
<svg class="a" style="left:1426px;top:859px" width="19" height="15" viewBox="0 0 19 15"><rect x="4.5" y="2.5" width="10" height="10" rx="3" fill="#f8f8f8" stroke="#8a8a8a" stroke-width="1.4"/><path d="M1 5 L3.5 7.5 L1 10 Z M18 5 L15.5 7.5 L18 10 Z" fill="#777"/></svg>
<svg class="a" style="left:1449px;top:858px" width="6" height="16" viewBox="0 0 6 16"><path d="M0.5 2 H5.5 M0.5 5 H5.5 M0.5 8 H5.5 M0.5 11 H5.5 M0.5 14 H5.5" stroke="#b8b8b8" stroke-width="1"/></svg>
<div class="a" style="left:330px;top:881px;width:264px;height:18px;background:#fdfdfd"></div>
<div class="t" style="left:335.5px;top:884.5px;font-size:11.3px;color:#3a3a3a">Main Timeline</div>
<svg class="a" style="left:576px;top:884px" width="8" height="12" viewBox="0 0 8 12"><path d="M2 4.5 L4 2.5 L6 4.5 M2 7.5 L4 9.5 L6 7.5" fill="none" stroke="#777" stroke-width="1.2"/></svg>
<div class="a" style="left:330px;top:899px;width:264px;height:18px;background:#e1e1e1"></div>
<div class="t" style="left:351.5px;top:902.5px;font-size:11.3px;color:#4a4a4a">Timeline Actions</div>
<svg class="a" style="left:577px;top:902px" width="12" height="12" viewBox="0 0 12 12"><path d="M6 1.5 L10.5 6 L6 10.5 L1.5 6 Z" fill="#f6f6f6" stroke="#cfcfcf" stroke-width=".8"/><circle cx="6" cy="6" r="1" fill="#aaa"/></svg>
<div class="a" style="left:330px;top:917.0px;width:264px;height:17.6px;background:#3561d9"></div>
<div class="a" style="left:351px;top:920.8px;width:10px;height:10px;border:1.2px solid #f0f0f0;background:transparent;border-radius:1.5px"></div>
<div class="t" style="left:367.5px;top:920.2px;font-size:11.3px;color:#ffffff">Map view btn</div>
<svg class="a" style="left:560.5px;top:920.8px" width="14" height="10" viewBox="0 0 14 10"><path d="M1.2 5 Q7 -1.2 12.8 5 Q7 11.2 1.2 5 Z" fill="none" stroke="#ffffff" stroke-width="1.9"/><circle cx="7" cy="5" r="1.6" fill="#ffffff"/></svg>
<svg class="a" style="left:579px;top:919.5px" width="9" height="12" viewBox="0 0 9 12"><path d="M2 5.5 V3.5 A2.5 2.5 0 0 1 7 3.5 V4" fill="none" stroke="#9bb4ee" stroke-width="1.2"/><rect x="1" y="5.5" width="7" height="6" rx="1" fill="#9bb4ee"/></svg>
<div class="a" style="left:330px;top:934.6px;width:264px;height:17.6px;background:#e9e9e9"></div>
<div class="a" style="left:351px;top:938.4px;width:10px;height:10px;border:1px solid #b5b5b5;background:#f4f4f4;border-radius:1.5px"></div>
<div class="t" style="left:367.5px;top:937.8px;font-size:11.3px;color:#3c3c3c">Map View</div>
<svg class="a" style="left:560.5px;top:938.4px" width="14" height="10" viewBox="0 0 14 10"><path d="M1.2 5 Q7 -1.2 12.8 5 Q7 11.2 1.2 5 Z" fill="none" stroke="#7a7a7a" stroke-width="1.9"/><circle cx="7" cy="5" r="1.6" fill="#7a7a7a"/></svg>
<svg class="a" style="left:579px;top:937.1px" width="9" height="12" viewBox="0 0 9 12"><path d="M2 5.5 V3.5 A2.5 2.5 0 0 1 7 3.5 V4" fill="none" stroke="#cfcfcf" stroke-width="1.2"/><rect x="1" y="5.5" width="7" height="6" rx="1" fill="#cfcfcf"/></svg>
<div class="a" style="left:330px;top:952.2px;width:264px;height:17.6px;background:#e4e4e4"></div>
<div class="a" style="left:351px;top:956.0px;width:10px;height:10px;border:1px solid #b5b5b5;background:#f4f4f4;border-radius:1.5px"></div>
<div class="t" style="left:367.5px;top:955.4px;font-size:11.3px;color:#3c3c3c">Menu Button</div>
<svg class="a" style="left:560.5px;top:956.0px" width="14" height="10" viewBox="0 0 14 10"><path d="M1.2 5 Q7 -1.2 12.8 5 Q7 11.2 1.2 5 Z" fill="none" stroke="#7a7a7a" stroke-width="1.9"/><circle cx="7" cy="5" r="1.6" fill="#7a7a7a"/></svg>
<svg class="a" style="left:579px;top:954.7px" width="9" height="12" viewBox="0 0 9 12"><path d="M2 5.5 V3.5 A2.5 2.5 0 0 1 7 3.5 V4" fill="none" stroke="#cfcfcf" stroke-width="1.2"/><rect x="1" y="5.5" width="7" height="6" rx="1" fill="#cfcfcf"/></svg>
<div class="a" style="left:330px;top:969.8px;width:264px;height:17.6px;background:#e9e9e9"></div>
<div class="a" style="left:351px;top:973.6px;width:10px;height:10px;border:1px solid #b5b5b5;background:#f4f4f4;border-radius:1.5px"></div>
<div class="t" style="left:367.5px;top:973.0px;font-size:11.3px;color:#3c3c3c">Callout Beacon</div>
<svg class="a" style="left:560.5px;top:973.6px" width="14" height="10" viewBox="0 0 14 10"><path d="M1.2 5 Q7 -1.2 12.8 5 Q7 11.2 1.2 5 Z" fill="none" stroke="#7a7a7a" stroke-width="1.9"/><circle cx="7" cy="5" r="1.6" fill="#7a7a7a"/></svg>
<svg class="a" style="left:579px;top:972.3px" width="9" height="12" viewBox="0 0 9 12"><path d="M2 5.5 V3.5 A2.5 2.5 0 0 1 7 3.5 V4" fill="none" stroke="#cfcfcf" stroke-width="1.2"/><rect x="1" y="5.5" width="7" height="6" rx="1" fill="#cfcfcf"/></svg>
<div class="a" style="left:330px;top:987.4px;width:264px;height:17.6px;background:#e4e4e4"></div>
<div class="a" style="left:351px;top:991.2px;width:10px;height:10px;border:1px solid #b5b5b5;background:#f4f4f4;border-radius:1.5px"></div>
<div class="t" style="left:367.5px;top:990.6px;font-size:11.3px;color:#3c3c3c">Audio Beacon Btn</div>
<svg class="a" style="left:560.5px;top:991.2px" width="14" height="10" viewBox="0 0 14 10"><path d="M1.2 5 Q7 -1.2 12.8 5 Q7 11.2 1.2 5 Z" fill="none" stroke="#7a7a7a" stroke-width="1.9"/><circle cx="7" cy="5" r="1.6" fill="#7a7a7a"/></svg>
<svg class="a" style="left:579px;top:989.9px" width="9" height="12" viewBox="0 0 9 12"><path d="M2 5.5 V3.5 A2.5 2.5 0 0 1 7 3.5 V4" fill="none" stroke="#cfcfcf" stroke-width="1.2"/><rect x="1" y="5.5" width="7" height="6" rx="1" fill="#cfcfcf"/></svg>
<div class="a" style="left:330px;top:1005.0px;width:264px;height:17.6px;background:#e9e9e9"></div>
<div class="a" style="left:351px;top:1008.8px;width:10px;height:10px;border:1px solid #b5b5b5;background:#f4f4f4;border-radius:1.5px"></div>
<div class="t" style="left:367.5px;top:1008.2px;font-size:11.3px;color:#3c3c3c">Audio Beacon Btn</div>
<svg class="a" style="left:560.5px;top:1008.8px" width="14" height="10" viewBox="0 0 14 10"><path d="M1.2 5 Q7 -1.2 12.8 5 Q7 11.2 1.2 5 Z" fill="none" stroke="#7a7a7a" stroke-width="1.9"/><circle cx="7" cy="5" r="1.6" fill="#7a7a7a"/></svg>
<svg class="a" style="left:579px;top:1007.5px" width="9" height="12" viewBox="0 0 9 12"><path d="M2 5.5 V3.5 A2.5 2.5 0 0 1 7 3.5 V4" fill="none" stroke="#cfcfcf" stroke-width="1.2"/><rect x="1" y="5.5" width="7" height="6" rx="1" fill="#cfcfcf"/></svg>
<div class="a" style="left:330px;top:1022.6px;width:264px;height:17.6px;background:#e4e4e4"></div>
<div class="a" style="left:351px;top:1026.4px;width:10px;height:10px;border:1px solid #b5b5b5;background:#f4f4f4;border-radius:1.5px"></div>
<div class="t" style="left:367.5px;top:1025.8px;font-size:11.3px;color:#3c3c3c">Rectangle</div>
<svg class="a" style="left:560.5px;top:1026.4px" width="14" height="10" viewBox="0 0 14 10"><path d="M1.2 5 Q7 -1.2 12.8 5 Q7 11.2 1.2 5 Z" fill="none" stroke="#7a7a7a" stroke-width="1.9"/><circle cx="7" cy="5" r="1.6" fill="#7a7a7a"/></svg>
<svg class="a" style="left:579px;top:1025.1px" width="9" height="12" viewBox="0 0 9 12"><path d="M2 5.5 V3.5 A2.5 2.5 0 0 1 7 3.5 V4" fill="none" stroke="#cfcfcf" stroke-width="1.2"/><rect x="1" y="5.5" width="7" height="6" rx="1" fill="#cfcfcf"/></svg>
<div class="a" style="left:330px;top:1040.5px;width:264px;height:3.5px;background:#dedede"></div>
<div class="a" style="left:330px;top:1044px;width:1128px;height:16px;background:#ffffff"></div>
<div class="t" style="left:338.5px;top:1047px;font-size:11.3px;color:#4a4a4a">Properties</div>
<svg class="a" style="left:575px;top:1048px" width="10" height="8" viewBox="0 0 10 8"><path d="M2 2 L5 5 L8 2" fill="none" stroke="#444" stroke-width="1.6"/></svg>
<div class="a" style="left:330px;top:1060px;width:264px;height:20px;background:#e3e3e3"></div>
<div class="t" style="left:350px;top:1063.5px;font-size:11.3px;color:#4a4a4a">Opacity</div>
<svg class="a" style="left:577px;top:1063.5px" width="12" height="12" viewBox="0 0 12 12"><path d="M6 1.5 L10.5 6 L6 10.5 L1.5 6 Z" fill="#f6f6f6" stroke="#cfcfcf" stroke-width=".8"/><path d="M6 4 V8 M4 6 H8" stroke="#aaa" stroke-width=".8"/></svg>
<div class="a" style="left:594px;top:881px;width:864px;height:18px;background:#ffffff"></div>
<div class="a" style="left:594px;top:899px;width:864px;height:18px;background:#e4e4e4"></div>
<div class="a" style="left:594px;top:917.0px;width:864px;height:17.6px;background:#c6d3ef"></div>
<div class="a" style="left:594px;top:934.6px;width:864px;height:17.6px;background:#f0f0f0"></div>
<div class="a" style="left:594px;top:952.2px;width:864px;height:17.6px;background:#f6f6f6"></div>
<div class="a" style="left:594px;top:969.8px;width:864px;height:17.6px;background:#f0f0f0"></div>
<div class="a" style="left:594px;top:987.4px;width:864px;height:17.6px;background:#f6f6f6"></div>
<div class="a" style="left:594px;top:1005.0px;width:864px;height:17.6px;background:#f0f0f0"></div>
<div class="a" style="left:594px;top:1022.6px;width:864px;height:17.6px;background:#f6f6f6"></div>
<div class="a" style="left:594px;top:1040.5px;width:864px;height:3.5px;background:#f3f3f3"></div>
<div class="a" style="left:594px;top:1060px;width:864px;height:20px;background:#f2f2f2"></div>
<div class="a" style="left:594px;top:881px;width:1px;height:199px;background:#d8d8d8"></div>
<svg class="a" style="left:594px;top:881px" width="864" height="199" viewBox="0 0 864 199"><path d="M7.0 2 V18 M12.9 15 V18 M18.7 15 V18 M24.6 15 V18 M30.4 15 V18 M36.3 12 V18 M42.2 15 V18 M48.0 15 V18 M53.9 15 V18 M59.7 15 V18 M65.6 2 V18 M71.5 15 V18 M77.3 15 V18 M83.2 15 V18 M89.0 15 V18 M94.9 12 V18 M100.8 15 V18 M106.6 15 V18 M112.5 15 V18 M118.3 15 V18 M124.2 2 V18 M130.1 15 V18 M135.9 15 V18 M141.8 15 V18 M147.6 15 V18 M153.5 12 V18 M159.4 15 V18 M165.2 15 V18 M171.1 15 V18 M176.9 15 V18 M182.8 2 V18 M188.7 15 V18 M194.5 15 V18 M200.4 15 V18 M206.2 15 V18 M212.1 12 V18 M218.0 15 V18 M223.8 15 V18 M229.7 15 V18 M235.5 15 V18 M241.4 2 V18 M247.3 15 V18 M253.1 15 V18 M259.0 15 V18 M264.8 15 V18 M270.7 12 V18 M276.6 15 V18 M282.4 15 V18 M288.3 15 V18 M294.1 15 V18 M300.0 2 V18 M305.9 15 V18 M311.7 15 V18 M317.6 15 V18 M323.4 15 V18 M329.3 12 V18 M335.2 15 V18 M341.0 15 V18 M346.9 15 V18 M352.7 15 V18 M358.6 2 V18 M364.5 15 V18 M370.3 15 V18 M376.2 15 V18 M382.0 15 V18 M387.9 12 V18 M393.8 15 V18 M399.6 15 V18 M405.5 15 V18 M411.3 15 V18 M417.2 2 V18 M423.1 15 V18 M428.9 15 V18 M434.8 15 V18 M440.6 15 V18 M446.5 12 V18 M452.4 15 V18 M458.2 15 V18 M464.1 15 V18 M469.9 15 V18 M475.8 2 V18 M481.7 15 V18 M487.5 15 V18 M493.4 15 V18 M499.2 15 V18 M505.1 12 V18 M511.0 15 V18 M516.8 15 V18 M522.7 15 V18 M528.5 15 V18 M534.4 2 V18 M540.3 15 V18 M546.1 15 V18 M552.0 15 V18 M557.8 15 V18 M563.7 12 V18 M569.6 15 V18 M575.4 15 V18 M581.3 15 V18 M587.1 15 V18 M593.0 2 V18 M598.9 15 V18 M604.7 15 V18 M610.6 15 V18 M616.4 15 V18 M622.3 12 V18 M628.2 15 V18 M634.0 15 V18 M639.9 15 V18 M645.7 15 V18 M651.6 2 V18 M657.5 15 V18 M663.3 15 V18 M669.2 15 V18 M675.0 15 V18 M680.9 12 V18 M686.8 15 V18 M692.6 15 V18 M698.5 15 V18 M704.3 15 V18 M710.2 2 V18 M716.1 15 V18 M721.9 15 V18 M727.8 15 V18 M733.6 15 V18 M739.5 12 V18 M745.4 15 V18 M751.2 15 V18 M757.1 15 V18 M762.9 15 V18 M768.8 2 V18 M774.7 15 V18 M780.5 15 V18 M786.4 15 V18 M792.2 15 V18 M798.1 12 V18 M804.0 15 V18 M809.8 15 V18 M815.7 15 V18 M821.5 15 V18 M827.4 2 V18 M833.3 15 V18 M839.1 15 V18 M845.0 15 V18 M850.8 15 V18 M856.7 12 V18" stroke="#d2d2d2" stroke-width="1"/><path d="M7.0 18 V160 M7.0 179 V199 M65.6 18 V160 M65.6 179 V199 M124.2 18 V160 M124.2 179 V199 M182.8 18 V160 M182.8 179 V199 M241.4 18 V160 M241.4 179 V199 M300.0 18 V160 M300.0 179 V199 M358.6 18 V160 M358.6 179 V199 M417.2 18 V160 M417.2 179 V199 M475.8 18 V160 M475.8 179 V199 M534.4 18 V160 M534.4 179 V199 M593.0 18 V160 M593.0 179 V199 M651.6 18 V160 M651.6 179 V199 M710.2 18 V160 M710.2 179 V199 M768.8 18 V160 M768.8 179 V199 M827.4 18 V160 M827.4 179 V199" stroke="#e0e0e0" stroke-width="1"/><g font-family="Liberation Sans" font-size="9" fill="#ababab"><text x="9.5" y="10.5">0</text><text x="68.1" y="10.5">1</text><text x="126.7" y="10.5">2</text><text x="185.3" y="10.5">3</text><text x="243.9" y="10.5">4</text><text x="302.5" y="10.5">5</text><text x="361.1" y="10.5">6</text><text x="419.7" y="10.5">7</text><text x="478.3" y="10.5">8</text><text x="536.9" y="10.5">9</text><text x="595.5" y="10.5">10</text><text x="654.1" y="10.5">11</text><text x="712.7" y="10.5">12</text><text x="771.3" y="10.5">13</text><text x="829.9" y="10.5">14</text></g></svg>
<div class="t" style="left:1375.5px;top:1047px;font-size:10.8px;color:#444">Ease In Out</div>
<svg class="a" style="left:1439px;top:1047px" width="8" height="11" viewBox="0 0 8 11"><path d="M2 4 L4 2 L6 4 M2 7 L4 9 L6 7" fill="none" stroke="#666" stroke-width="1.1"/></svg>
<div class="a" style="left:600.3px;top:884px;width:1.6px;height:160px;background:#6d6d6d"></div>
<div class="a" style="left:600.3px;top:1060px;width:1.6px;height:20px;background:#6d6d6d"></div>
<svg class="a" style="left:595.5px;top:881px" width="11" height="8" viewBox="0 0 11 8"><path d="M0 0 H11 L5.5 7 Z" fill="#2a2a2a"/></svg>

<!-- ===== INSPECTOR ===== -->
<div class="a" style="left:1459px;top:177px;width:263px;height:903px;background:#f4f4f4;border-left:1px solid #cdcdcd"></div>
<div class="a" style="left:1460px;top:177px;width:262px;height:33px;background:#fbfbfb;border-bottom:1px solid #e2e2e2"></div>
<div class="a" style="left:1460px;top:210px;width:262px;height:20px;background:linear-gradient(#f6f6f6,#ececec)"></div>
<div class="t" style="left:1474px;top:214px;font-size:22px;color:#8b8e94;-webkit-text-stroke:0">Identity</div>
<!-- tab icons -->
<svg class="a" style="left:1466px;top:183px" width="16" height="20" viewBox="0 0 16 20"><path d="M1.5 1.5 H9.5 L14.5 6.5 V18.5 H1.5 Z M9.5 1.5 V6.5 H14.5" fill="none" stroke="#707070" stroke-width="1.2" stroke-linejoin="round"/></svg>
<svg class="a" style="left:1495px;top:183px" width="22" height="20" viewBox="0 0 22 20"><g fill="none" stroke="#707070" stroke-width="1.2" stroke-linejoin="round"><path d="M11 1.5 L20.5 6.5 L11 11.5 L1.5 6.5 Z"/><path d="M1.5 9.5 L11 14.5 L20.5 9.5"/><path d="M1.5 12.5 L11 17.5 L20.5 12.5"/></g></svg>
<svg class="a" style="left:1529px;top:182px" width="17" height="20" viewBox="0 0 17 20"><g fill="none" stroke="#707070" stroke-width="1.3"><circle cx="8.5" cy="4" r="2"/><path d="M7.5 6 L2 18.5 M9.5 6 L15 18.5"/><path d="M8.5 0.5 V2"/></g></svg>
<svg class="a" style="left:1559px;top:183px" width="21" height="20" viewBox="0 0 21 20"><g fill="none" stroke="#707070" stroke-width="1.3"><path d="M7 13 H1.5 V1.5 H13 V7"/><circle cx="12.5" cy="12" r="6.3"/></g></svg>
<svg class="a" style="left:1592px;top:183px" width="16" height="20" viewBox="0 0 16 20"><path d="M1.5 2.2 H14.5 M8 2.2 V18.5" stroke="#555" stroke-width="1.6"/></svg>
<svg class="a" style="left:1620px;top:182px" width="22" height="21" viewBox="0 0 22 21"><path d="M6.5 11 V3 A1.6 1.6 0 0 1 9.7 3 V9 M9.7 8.5 A1.5 1.5 0 0 1 12.7 8.5 V10 M12.7 9 A1.5 1.5 0 0 1 15.7 9 V10.5 M15.7 10 A1.5 1.5 0 0 1 18.7 10 V14 Q18.7 19.5 13.5 19.5 H11 Q8.5 19.5 6.5 17 L2 12 A1.5 1.5 0 0 1 4.5 10 L6.5 12" fill="none" stroke="#707070" stroke-width="1.2" stroke-linejoin="round"/></svg>
<svg class="a" style="left:1652px;top:183px" width="20" height="20" viewBox="0 0 20 20"><g fill="none" stroke="#707070" stroke-width="1.2"><ellipse cx="10" cy="10" rx="8.5" ry="3.5"/><ellipse cx="10" cy="10" rx="8.5" ry="3.5" transform="rotate(60 10 10)"/><ellipse cx="10" cy="10" rx="8.5" ry="3.5" transform="rotate(120 10 10)"/></g><circle cx="10" cy="10" r="1.5" fill="#707070"/></svg>
<div class="a" style="left:1677.5px;top:177px;width:32px;height:33px;background:#8e939b"></div>
<svg class="a" style="left:1683px;top:183px" width="21" height="21" viewBox="0 0 21 21"><circle cx="10.5" cy="10.5" r="8.8" fill="none" stroke="#e4e6ea" stroke-width="1.2"/><circle cx="10.5" cy="6.3" r="1.2" fill="#e4e6ea"/><rect x="9.5" y="8.8" width="2" height="7" rx=".8" fill="#e4e6ea"/></svg>
<svg class="a" style="left:1714px;top:185px" width="6" height="16" viewBox="0 0 6 16"><path d="M0.5 2 H5.5 M0.5 5 H5.5 M0.5 8 H5.5 M0.5 11 H5.5 M0.5 14 H5.5" stroke="#b5b5b5" stroke-width="1"/></svg>
<!-- lower inspector -->
<div class="a" style="left:1460px;top:540px;width:262px;height:5px;background:#e6e6e6"></div>
<div class="a" style="left:1460px;top:544px;width:262px;height:1px;background:#d9d9d9"></div>
<div class="t" style="left:1474px;top:557px;font-size:11px;font-weight:bold;color:#5a5a5a">Class Name</div>
<div class="a" style="left:1475px;top:582px;width:231px;height:17px;background:#fdfdfd;border-bottom:1px solid #dedede"></div>
<div class="a" style="left:1460px;top:610px;width:262px;height:1px;background:#e0e0e0"></div>
<div class="t" style="left:1474px;top:623px;font-size:11.3px;font-weight:bold;color:#5a5a5a">Additional HTML Attributes</div>
<div class="a" style="left:1475px;top:648px;width:231px;height:92px;background:#fff;border:1px solid #ececec"></div>
<div class="a" style="left:1476px;top:674px;width:229px;height:1px;background:#e2e2e2"></div>
<div class="a" style="left:1476px;top:691px;width:229px;height:15px;background:#f2f2f2"></div>
<div class="a" style="left:1476px;top:722px;width:229px;height:17px;background:#f2f2f2"></div>
<div class="a" style="left:1555px;top:654px;width:1px;height:14px;background:#e6e6e6"></div>
<div class="a" style="left:1696.5px;top:654px;width:1px;height:14px;background:#e6e6e6"></div>
<div class="a" style="left:1555px;top:675px;width:1px;height:64px;background:#a0a0a0"></div>
<div class="a" style="left:1696.5px;top:675px;width:1px;height:64px;background:#a0a0a0"></div>
<div class="t" style="left:1478px;top:656px;font-size:10.3px;color:#444">Key</div>
<div class="t" style="left:1559px;top:656px;font-size:10.3px;color:#444">Value</div>
<div class="a" style="left:1584px;top:746px;width:14px;height:1px;background:#b8b8b8"></div>
<div class="a" style="left:1584px;top:748.5px;width:14px;height:1px;background:#b8b8b8"></div>
<div class="a" style="left:1475px;top:749px;width:43px;height:20px;border:1px solid #d6d6d6;background:#f8f8f8;border-radius:2px"></div>
<div class="a" style="left:1496px;top:750px;width:1px;height:18px;background:#d6d6d6"></div>
<svg class="a" style="left:1479px;top:752px" width="14" height="14" viewBox="0 0 14 14"><path d="M7 1.5 V12.5 M1.5 7 H12.5" stroke="#333" stroke-width="1.3"/></svg>
<svg class="a" style="left:1500px;top:752px" width="14" height="14" viewBox="0 0 14 14"><path d="M2.5 7 H11.5" stroke="#c8c8c8" stroke-width="1.2"/></svg>
<!-- window right shadow strip -->



<!-- ===== POPUP ===== -->
<div class="a" style="left:1443px;top:229px;width:409px;height:311px;background:#f6f6f6;border-radius:14px;box-shadow:0 0 0 .5px rgba(0,0,0,.12),0 3px 16px rgba(0,0,0,.16)"></div>
<div class="t" style="left:1465.5px;top:235.5px;font-size:35.5px;color:#8c8f95;letter-spacing:-0.1px;-webkit-text-stroke:0">Identity</div>
<div class="a" style="left:1443px;top:280px;width:409px;height:1px;background:#e0e0e0"></div>
<div class="t" style="left:1466px;top:299px;font-size:16.3px;font-weight:bold;color:#575757;letter-spacing:.6px;-webkit-text-stroke:0">Accessibility</div>
<div class="t" style="left:1467px;top:338px;font-size:16.3px;font-weight:bold;color:#262626;letter-spacing:.3px;-webkit-text-stroke:0">Alternate text</div>
<div class="a" style="left:1469px;top:366px;width:358px;height:46px;background:#fdfdfd;box-shadow:0 1px 0 #d8d8d8"></div>
<div class="t" style="left:1473.5px;top:368.5px;font-size:16.3px;color:#333;line-height:21px;letter-spacing:.72px">Map View. Button. Double tap to explore<br>places around you and your marked places.</div>
<div class="t" style="left:1467px;top:426.5px;font-size:16.3px;color:#262626">Role</div>
<div class="a" style="left:1469px;top:456px;width:358px;height:24px;background:#fdfdfd;box-shadow:0 1px 0 #d8d8d8"></div>
<div class="t" style="left:1473.5px;top:458px;font-size:16.3px;color:#333;letter-spacing:.3px">Option</div>
<div class="a" style="left:1467px;top:498.5px;width:18px;height:18px;border-radius:4px;background:#3c78e8"></div>
<svg class="a" style="left:1467px;top:498.5px" width="18" height="18" viewBox="0 0 18 18"><path d="M4.2 9.5 L7.5 13 L13.8 4.8" fill="none" stroke="#fff" stroke-width="2.2" stroke-linecap="round" stroke-linejoin="round"/></svg>
<div class="t" style="left:1492px;top:498.5px;font-size:16.3px;color:#333;letter-spacing:.3px">Tab index</div>
<div class="a" style="left:1583px;top:502.5px;width:131px;height:5px;border-radius:2.5px;background:#e6e6e6"></div>
<svg class="a" style="left:1586px;top:496px" width="22" height="24" viewBox="0 0 22 24"><path d="M3 4 Q3 1.5 6 1.5 H16 Q19 1.5 19 4 V11 L11 19 L3 11 Z" fill="#fdfdfd" stroke="#c8c8c8" stroke-width="1"/></svg>
<svg class="a" style="left:1585px;top:513px" width="130" height="8" viewBox="0 0 130 8"><path d="M5 1 V6 M28 1 V6 M51 1 V6 M76 1 V6 M99 1 V6 M122 1 V6" stroke="#9a9a9a" stroke-width="1.3"/></svg>
<div class="a" style="left:1726.5px;top:497px;width:79px;height:24px;background:#fdfdfd;box-shadow:0 1px 0 #dadada"></div>
<div class="t" style="left:1731.5px;top:500px;font-size:16.3px;color:#333">7</div>
<div class="a" style="left:1811px;top:496px;width:18px;height:25px;border-radius:5px;background:#fbfbfb;box-shadow:0 0 0 .6px #d4d4d4,0 1px 1px rgba(0,0,0,.08)"></div>
<div class="a" style="left:1811px;top:507.8px;width:18px;height:1px;background:#e4e4e4"></div>
<svg class="a" style="left:1814px;top:498px" width="12" height="21" viewBox="0 0 12 21"><path d="M2.5 6.5 L6 3 L9.5 6.5 M2.5 13.5 L6 17 L9.5 13.5" fill="none" stroke="#444" stroke-width="1.7" stroke-linecap="round" stroke-linejoin="round"/></svg>


<svg class="a" style="left:1600px;top:830px" width="260" height="250" viewBox="1600 830 260 250">
<defs>
 <linearGradient id="og" x1="0" y1="0" x2="0" y2="1"><stop offset="0" stop-color="#e8bb80"/><stop offset=".5" stop-color="#eab066"/><stop offset="1" stop-color="#efa445"/></linearGradient>
 <linearGradient id="dk" x1="0" y1="0" x2="0" y2="1"><stop offset="0" stop-color="#444"/><stop offset=".25" stop-color="#262626"/><stop offset="1" stop-color="#151515"/></linearGradient>
 <radialGradient id="wh" cx=".5" cy=".45" r=".6"><stop offset="0" stop-color="#fbfbfb"/><stop offset=".6" stop-color="#ececec"/><stop offset="1" stop-color="#c4c4c4"/></radialGradient>
 <linearGradient id="rl" x1="0" y1="0" x2="0" y2="1"><stop offset="0" stop-color="#f0f0f0"/><stop offset=".6" stop-color="#dcdcdc"/><stop offset="1" stop-color="#bdbdbd"/></linearGradient>
 <clipPath id="cw"><rect x="1600" y="898" width="260" height="100"/></clipPath>
 <filter id="sh" x="-20%" y="-20%" width="140%" height="140%"><feGaussianBlur stdDeviation="2"/></filter>
</defs>
<rect x="1626" y="850" width="195" height="194" rx="42" fill="#000" opacity=".12" filter="url(#sh)"/>
<rect x="1626" y="848.5" width="195" height="195" rx="42" fill="url(#og)"/>
<circle cx="1724.5" cy="945" r="85" fill="url(#dk)"/>
<circle cx="1724.5" cy="945" r="84" fill="none" stroke="#555" stroke-width="1" opacity=".6"/>
<g clip-path="url(#cw)"><circle cx="1724.5" cy="948" r="71" fill="url(#wh)"/></g>
<rect x="1639" y="894" width="171" height="15" fill="url(#rl)"/>
<path d="M1642 909 V904 M1647 909 V906 M1652 909 V906 M1657 909 V906 M1662 909 V903 M1667 909 V906 M1672 909 V906 M1677 909 V906 M1682 909 V903 M1687 909 V906 M1692 909 V906 M1697 909 V906 M1702 909 V903 M1707 909 V906 M1712 909 V906 M1717 909 V906 M1722 909 V903 M1727 909 V906 M1732 909 V906 M1737 909 V906 M1742 909 V903 M1747 909 V906 M1752 909 V906 M1757 909 V906 M1762 909 V903 M1767 909 V906 M1772 909 V906 M1777 909 V906 M1782 909 V903 M1787 909 V906 M1792 909 V906 M1797 909 V906 M1802 909 V903 M1807 909 V906" stroke="#9a9a9a" stroke-width=".8"/>
<rect x="1639" y="983" width="110" height="15" fill="url(#rl)"/>
<path d="M1642 983 V988 M1647 983 V986 M1652 983 V986 M1657 983 V986 M1662 983 V989 M1667 983 V986 M1672 983 V986 M1677 983 V986 M1682 983 V989 M1687 983 V986 M1692 983 V986 M1697 983 V986 M1702 983 V989 M1707 983 V986 M1712 983 V986 M1717 983 V986 M1722 983 V989 M1727 983 V986 M1732 983 V986 M1737 983 V986 M1742 983 V989" stroke="#9a9a9a" stroke-width=".8"/>
<g transform="translate(1730.6 946) scale(0.2117)">
 <path d="M71 460 L30 0 L481 0 L440 460 L255 512 Z" fill="#000" opacity=".18" transform="translate(6 8)" filter="url(#sh)"/>
 <path d="M71 460 L30 0 L481 0 L440 460 L255 512 Z" fill="#e44d26"/>
 <path d="M256 472 L405 431 L440 37 L256 37 Z" fill="#f16529"/>
 <path d="M256 208 L181 208 L176 150 L256 150 L256 94 L114 94 L115 109 L129 265 L256 265 Z" fill="#ebebeb"/>
 <path d="M256 355 L255 355 L192 338 L188 293 L132 293 L139 382 L255 414 L256 414 Z" fill="#ebebeb"/>
 <path d="M255 208 L255 265 L325 265 L318 338 L255 355 L255 414 L371 382 L385 223 L387 208 Z" fill="#fff"/>
 <path d="M255 94 L255 150 L392 150 L397 109 L398 94 Z" fill="#fff"/>
</g>
</svg>

</div>
</body></html>
